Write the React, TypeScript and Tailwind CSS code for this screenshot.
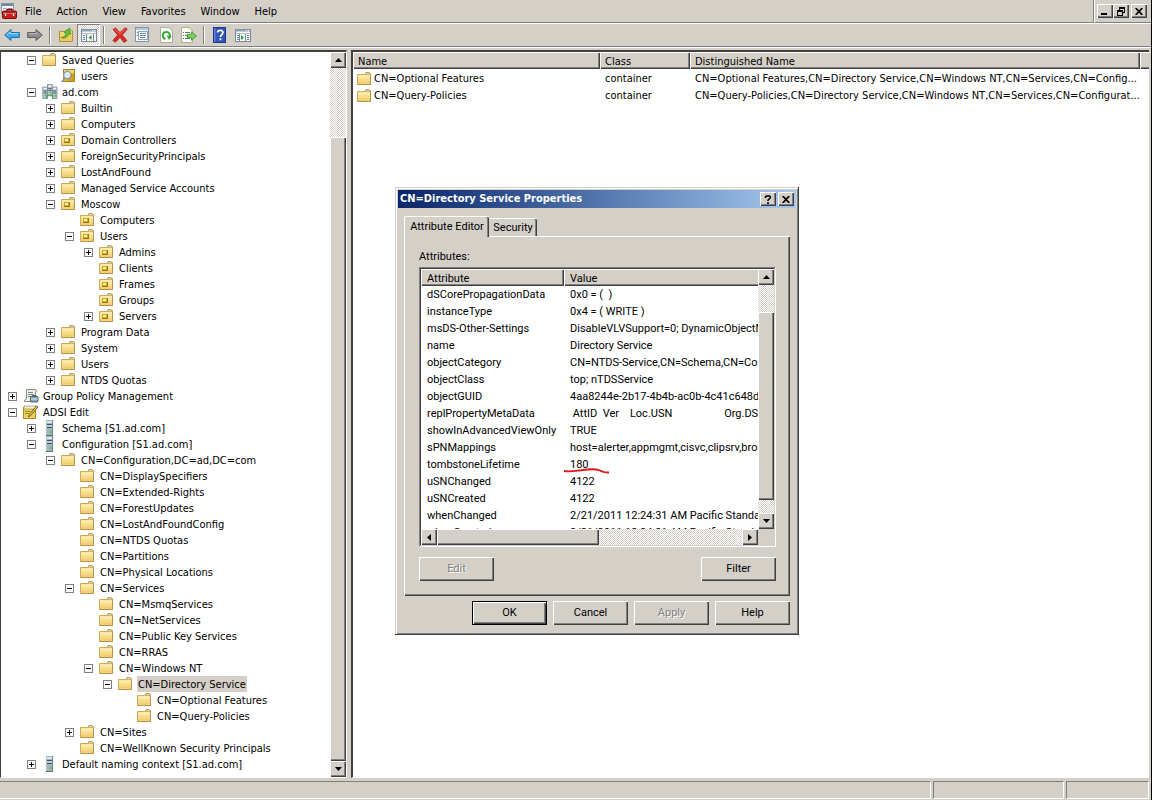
import type { ReactNode } from "react";

const RAISED = "bg-[#d4d0c8] shadow-[inset_1px_1px_0_#fff,inset_-1px_-1px_0_#404040,inset_-2px_-2px_0_#808080]";
const DITHER = "bg-[image:repeating-conic-gradient(#ffffff_0_25%,#d4d0c8_0_50%)] bg-[length:2px_2px]";

type IconKind = "folder" | "ou" | "query" | "domain" | "gpo" | "adsi" | "server";

function FolderShape() {
  return (
    <>
      <path d="M.5 3.5 H8 L9 1.5 H12 L13.5 3 V13.5 H.5 Z" fill="#f7dd8c" stroke="#cfaa58" />
      <path d="M1 4 H13 V7 H1 Z" fill="#fbe9a8" />
      <path d="M1 10 H13 V13 H1 Z" fill="#f2d078" />
      <path d="M8.5 3.2 L9.3 1.5 H12 L13.3 3.2 Z" fill="#fff6d8" stroke="#a98a4a" strokeWidth=".8" />
      <path d="M.5 13.5 H13.5 V4" fill="none" stroke="#b9934a" />
    </>
  );
}

function ServerShape({ x, y, h }: { x: number; y: number; h: number }) {
  return (
    <g>
      <rect x={x} y={y} width="4.6" height={h} fill="#b3c3cc" stroke="#72838f" strokeWidth=".7" />
      <rect x={x + 0.8} y={y + 0.8} width="3" height="1.6" fill="#eef4f8" />
      <path d={`M${x + 0.8} ${y + 4} h3 M${x + 0.8} ${y + 6} h3`} stroke="#3f5160" strokeWidth=".9" />
      <rect x={x + 2.2} y={y + h - 3.6} width="1.6" height="1.6" fill="#54bd4a" />
    </g>
  );
}

function TreeIcon({ kind }: { kind: IconKind }) {
  return (
    <svg viewBox="0 0 16 16" className="h-4 w-4 shrink-0" aria-hidden="true">
      {(kind === "folder" || kind === "ou") && <FolderShape />}
      {kind === "ou" && (
        <g>
          <rect x="3" y="6" width="6" height="5" fill="#9a7d16" />
          <rect x="3" y="6" width="5" height="4" fill="#c9a92c" />
          <rect x="4" y="7" width="3" height="2" fill="#fbf0a8" />
        </g>
      )}
      {kind === "query" && (
        <g>
          <rect x="2.5" y="1.5" width="11" height="12" fill="#dcb93c" stroke="#a8871d" />
          <path d="M3 2 H13 V5 H3 Z" fill="#f0d878" />
          <path d="M10 6 H13 V13 H6 Z" fill="#c79f22" />
          <path d="M4 10 L.8 14" stroke="#8d99a3" strokeWidth="1.8" />
          <circle cx="6.3" cy="7" r="3.6" fill="#dcebf2" stroke="#8d99a3" strokeWidth="1.2" />
        </g>
      )}
      {kind === "domain" && (
        <g>
          <ServerShape x={0.8} y={3} h={11.5} />
          <ServerShape x={10.4} y={3} h={11.5} />
          <ServerShape x={5.6} y={0.6} h={11} />
          <path d="M5 15 V11.5 H10.6 V15" fill="none" stroke="#53a85a" strokeWidth="1.4" />
        </g>
      )}
      {kind === "gpo" && (
        <g>
          <path d="M3.5 1.5 H13 Q14.5 3 12.5 4 V13.5 H1.5 Q0.5 12 3.5 11 Z" fill="#f1efe6" stroke="#8a8a82" />
          <path d="M5 4.5 H10 M5 6.5 H11 M5 8.5 H9" stroke="#7d8790" />
          <rect x="7.5" y="8.5" width="7.5" height="5.5" rx="1" fill="#8ba5b8" stroke="#4b6375" />
          <path d="M9.5 8.5 V7.5 H13 V8.5" fill="none" stroke="#4b6375" />
          <path d="M8 11 H14.5" stroke="#dfe9ef" />
        </g>
      )}
      {kind === "adsi" && (
        <g>
          <path d="M.5 3.5 H12.5 V14.5 H.5 Z" fill="#e9cf58" stroke="#a98b22" />
          <path d="M1 2 H13 V5 H1 Z" fill="#f7f1cf" stroke="#9a915f" strokeWidth=".7" />
          <path d="M2 7.5 H7 M2 9.5 H6" stroke="#a98b22" />
          <path d="M15 3 L7.6 11.5 L5.6 13 L6.3 10.4 L13.4 2 Z" fill="#f4d23a" stroke="#4d4520" strokeWidth=".8" />
        </g>
      )}
      {kind === "server" && (
        <g>
          <rect x="4" y="0" width="7" height="16" fill="#9fb4bd" />
          <path d="M4.4 0 V16" stroke="#b4c5cc" />
          <path d="M10.6 0 V16" stroke="#6e8490" />
          <path d="M5 1 H10 V3 H5 Z" fill="#dde9ed" />
          <path d="M5 4.5 H10 M5 7.5 H10" stroke="#41535e" />
          <path d="M5 6 H10" stroke="#dde8ec" />
          <rect x="8" y="11" width="2" height="2" fill="#5fc24f" />
          <path d="M4 15.5 H11" stroke="#5d727d" />
        </g>
      )}
    </svg>
  );
}

type Node = { d: number; label: string; icon?: IconKind; ex?: "+" | "-"; selected?: boolean };

const nodes: Node[] = [
  { d: 1, label: "Saved Queries", ex: "-" },
  { d: 2, label: "users", icon: "query" },
  { d: 1, label: "ad.com", icon: "domain", ex: "-" },
  { d: 2, label: "Builtin", ex: "+" },
  { d: 2, label: "Computers", ex: "+" },
  { d: 2, label: "Domain Controllers", icon: "ou", ex: "+" },
  { d: 2, label: "ForeignSecurityPrincipals", ex: "+" },
  { d: 2, label: "LostAndFound", ex: "+" },
  { d: 2, label: "Managed Service Accounts", ex: "+" },
  { d: 2, label: "Moscow", icon: "ou", ex: "-" },
  { d: 3, label: "Computers", icon: "ou" },
  { d: 3, label: "Users", icon: "ou", ex: "-" },
  { d: 4, label: "Admins", icon: "ou", ex: "+" },
  { d: 4, label: "Clients", icon: "ou" },
  { d: 4, label: "Frames", icon: "ou" },
  { d: 4, label: "Groups", icon: "ou" },
  { d: 4, label: "Servers", icon: "ou", ex: "+" },
  { d: 2, label: "Program Data", ex: "+" },
  { d: 2, label: "System", ex: "+" },
  { d: 2, label: "Users", ex: "+" },
  { d: 2, label: "NTDS Quotas", ex: "+" },
  { d: 0, label: "Group Policy Management", icon: "gpo", ex: "+" },
  { d: 0, label: "ADSI Edit", icon: "adsi", ex: "-" },
  { d: 1, label: "Schema [S1.ad.com]", icon: "server", ex: "+" },
  { d: 1, label: "Configuration [S1.ad.com]", icon: "server", ex: "-" },
  { d: 2, label: "CN=Configuration,DC=ad,DC=com", ex: "-" },
  { d: 3, label: "CN=DisplaySpecifiers" },
  { d: 3, label: "CN=Extended-Rights" },
  { d: 3, label: "CN=ForestUpdates" },
  { d: 3, label: "CN=LostAndFoundConfig" },
  { d: 3, label: "CN=NTDS Quotas" },
  { d: 3, label: "CN=Partitions" },
  { d: 3, label: "CN=Physical Locations" },
  { d: 3, label: "CN=Services", ex: "-" },
  { d: 4, label: "CN=MsmqServices" },
  { d: 4, label: "CN=NetServices" },
  { d: 4, label: "CN=Public Key Services" },
  { d: 4, label: "CN=RRAS" },
  { d: 4, label: "CN=Windows NT", ex: "-" },
  { d: 5, label: "CN=Directory Service", ex: "-", selected: true },
  { d: 6, label: "CN=Optional Features" },
  { d: 6, label: "CN=Query-Policies" },
  { d: 3, label: "CN=Sites", ex: "+" },
  { d: 3, label: "CN=WellKnown Security Principals" },
  { d: 1, label: "Default naming context [S1.ad.com]", icon: "server", ex: "+" },
];

const INDENT = ["pl-[7px]", "pl-[26px]", "pl-[45px]", "pl-[64px]", "pl-[83px]", "pl-[102px]", "pl-[121px]"];

function TreeRow({ node }: { node: Node }) {
  return (
    <li className={`flex h-4 items-center ${INDENT[node.d]}`}>
      {node.ex ? (
        <button
          type="button"
          aria-label={`${node.ex === "+" ? "Expand" : "Collapse"} ${node.label}`}
          className="mr-1.5 h-[9px] w-[9px] shrink-0 border border-[#808080] bg-white"
        >
          <svg viewBox="0 0 7 7" className="block h-[7px] w-[7px]" shapeRendering="crispEdges">
            <path d="M1 3h5v1H1z" />
            {node.ex === "+" && <path d="M3 1h1v5H3z" />}
          </svg>
        </button>
      ) : (
        <span className="mr-1.5 w-[9px] shrink-0" />
      )}
      <TreeIcon kind={node.icon ?? "folder"} />
      <span className={`ml-[3px] h-4 px-px leading-[18px] whitespace-nowrap ${node.selected ? "bg-[#d4d0c8]" : ""}`}>
        {node.label}
      </span>
    </li>
  );
}

const ARROWS = {
  up: "M0 4 L3.5 0 L7 4 Z",
  down: "M0 0 H7 L3.5 4 Z",
  left: "M4 0 V7 L0 3.5 Z",
  right: "M0 0 V7 L4 3.5 Z",
};

function ScrollButton({ dir }: { dir: keyof typeof ARROWS }) {
  const horizontal = dir === "left" || dir === "right";
  return (
    <button type="button" aria-label={`Scroll ${dir}`} className={`flex h-4 w-4 shrink-0 items-center justify-center ${RAISED}`}>
      <svg viewBox={horizontal ? "0 0 4 7" : "0 0 7 4"} className={horizontal ? "h-[7px] w-1" : "h-1 w-[7px]"}>
        <path d={ARROWS[dir]} />
      </svg>
    </button>
  );
}

function ToolButton({ label, pressed, children }: { label: string; pressed?: boolean; children: ReactNode }) {
  return (
    <button
      type="button"
      aria-label={label}
      className={`flex h-[22px] w-[23px] items-center justify-center ${
        pressed ? `${DITHER} shadow-[inset_1px_1px_0_#808080,inset_-1px_-1px_0_#fff]` : ""
      }`}
    >
      <svg viewBox="0 0 16 16" className="h-4 w-4">
        {children}
      </svg>
    </button>
  );
}

function Separator() {
  return (
    <span className="flex w-2 justify-center">
      <span className="h-[18px] w-0.5 border-l border-[#808080] bg-white" />
    </span>
  );
}

function PaneGlyph({ flip }: { flip?: boolean }) {
  return (
    <g>
      <rect x=".5" y="2.5" width="15" height="12" fill="#f6f8f8" stroke="#7d8a96" />
      <path d="M1 3.5 H15" stroke="#8ea0b2" strokeWidth="2" />
      <path d="M11 3.5 h1 M13 3.5 h1" stroke="#fff" />
      <path d="M1 6.5 H15" stroke="#b6c0c8" />
      <path d={flip ? "M4.5 7 V14 M10.5 7 V14" : "M5.5 7 V14 M12.5 7 V14"} stroke="#7d8a96" />
      <path
        d={flip ? "M2 8.5 h2 M2 10.5 h2 M2 12.5 h2 M12 8.5 h2 M12 10.5 h2 M12 12.5 h2" : "M2 8.5 h2 M2 10.5 h2 M2 12.5 h2"}
        stroke="#5f86b3"
      />
      <path d={flip ? "M6 8 V13 L9 10.5 Z" : "M10.5 8 V13 L7.5 10.5 Z"} fill="#2e9e38" />
    </g>
  );
}

const TH = "h-[17px] bg-[#d4d0c8] p-0 pt-0.5 text-left leading-[15px] font-normal";
const TH_EDGE = "shadow-[inset_1px_1px_0_#fff,inset_-1px_-1px_0_#404040,inset_-2px_-2px_0_#808080]";
const TH_LAST = "shadow-[inset_1px_1px_0_#fff,inset_0_-1px_0_#404040,inset_0_-2px_0_#808080]";
const TD = "h-[17px] p-0 pt-0.5 leading-[15px] whitespace-pre";
const ATTR_TD = "h-[17px] p-0 pl-1.5 leading-[17px] whitespace-pre";

const results = [
  ["CN=Optional Features", "container", "CN=Optional Features,CN=Directory Service,CN=Windows NT,CN=Services,CN=Config..."],
  ["CN=Query-Policies", "container", "CN=Query-Policies,CN=Directory Service,CN=Windows NT,CN=Services,CN=Configurat..."],
];

const attributes = [
  ["dSCorePropagationData", "0x0 = (  )"],
  ["instanceType", "0x4 = ( WRITE )"],
  ["msDS-Other-Settings", "DisableVLVSupport=0; DynamicObjectM"],
  ["name", "Directory Service"],
  ["objectCategory", "CN=NTDS-Service,CN=Schema,CN=Co"],
  ["objectClass", "top; nTDSService"],
  ["objectGUID", "4aa8244e-2b17-4b4b-ac0b-4c41c648d5"],
  ["replPropertyMetaData", " AttID  Ver    Loc.USN                   Org.DS"],
  ["showInAdvancedViewOnly", "TRUE"],
  ["sPNMappings", "host=alerter,appmgmt,cisvc,clipsrv,brow"],
  ["tombstoneLifetime", "180"],
  ["uSNChanged", "4122"],
  ["uSNCreated", "4122"],
  ["whenChanged", "2/21/2011 12:24:31 AM Pacific Standa"],
  ["whenCreated", "2/21/2011 12:24:31 AM Pacific Standa"],
];

function DialogButton({ label, primary, disabled }: { label: string; primary?: boolean; disabled?: boolean }) {
  return (
    <button
      type="button"
      disabled={disabled}
      className={`h-6 w-[75px] pt-px ${RAISED} ${primary ? "border border-black" : ""} ${
        disabled ? "text-[#808080] [text-shadow:1px_1px_0_#fff]" : ""
      }`}
    >
      {label}
    </button>
  );
}

function PropertiesDialog() {
  return (
    <section
      role="dialog"
      aria-label="CN=Directory Service Properties"
      className="absolute top-[187px] left-[395px] w-[404px] bg-[#d4d0c8] p-[3px] pb-2.5 font-[Roboto,'Liberation_Sans',Arial,sans-serif] shadow-[inset_-1px_-1px_0_#404040,inset_1px_1px_0_#d4d0c8,inset_2px_2px_0_#fff,inset_-2px_-2px_0_#808080]"
    >
      <header className="flex h-[18px] items-center bg-linear-to-r from-[#0a246a] to-[#a6caf0] pr-0.5 pl-0.5">
        <h2 className="flex-1 pt-px font-['DejaVu_Sans_Condensed','DejaVu_Sans',sans-serif] text-[11px] font-bold text-white">
          CN=Directory Service Properties
        </h2>
        <button type="button" aria-label="Help" className={`mr-0.5 flex h-[14px] w-4 items-center justify-center ${RAISED}`}>
          <svg viewBox="0 0 8 9" className="h-[9px] w-2">
            <path d="M1.5 3 V1.8 L2.5 1 H5.5 L6.3 1.8 V3 L4 5 V6" fill="none" stroke="#000" strokeWidth="1.6" />
            <path d="M3.1 7.2 h1.8 V9 h-1.8 z" />
          </svg>
        </button>
        <button type="button" aria-label="Close" className={`flex h-[14px] w-4 items-center justify-center ${RAISED}`}>
          <svg viewBox="0 0 8 7" className="h-[7px] w-2">
            <path d="M.7 0 L7.3 7 M7.3 0 L.7 7" stroke="#000" strokeWidth="1.7" />
          </svg>
        </button>
      </header>

      <div className="px-1.5 pt-2">
        <div role="tablist" className="flex h-5 items-end">
          <button
            type="button"
            role="tab"
            aria-selected="true"
            className="relative z-10 -mb-px h-[21px] w-[85px] rounded-t-xs border-t border-l border-white bg-[#d4d0c8] shadow-[inset_-1px_0_0_#404040,inset_-2px_0_0_#808080]"
          >
            Attribute Editor
          </button>
          <button
            type="button"
            role="tab"
            aria-selected="false"
            className="h-[18px] w-12 rounded-t-xs border-t border-white bg-[#d4d0c8] pt-px shadow-[inset_-1px_0_0_#404040,inset_-2px_0_0_#808080]"
          >
            Security
          </button>
        </div>

        <div role="tabpanel" className="border-t border-l border-white px-3.5 pt-3 pb-[15px] shadow-[inset_-1px_-1px_0_#404040,inset_-2px_-2px_0_#808080]">
          <h3 className="leading-4">Attributes:</h3>
          <div className="mt-0.5 border-t border-r border-b border-l border-t-[#808080] border-r-white border-b-white border-l-[#808080]">
            <div className="border border-t-[#404040] border-r-[#d4d0c8] border-b-[#d4d0c8] border-l-[#404040]">
              <div className="flex h-[260px]">
                <div className="relative flex-1 overflow-hidden bg-white">
                  <table className="w-full table-fixed border-collapse">
                    <thead>
                      <tr>
                        <th scope="col" className={`w-[143px] pl-1.5 ${TH} ${TH_EDGE}`}>Attribute</th>
                        <th scope="col" className={`pl-1.5 ${TH} ${TH_LAST}`}>Value</th>
                      </tr>
                    </thead>
                    <tbody>
                      {attributes.map(([name, value]) => (
                        <tr key={name}>
                          <td className={ATTR_TD}>{name}</td>
                          <td className={`overflow-hidden ${ATTR_TD}`}>{value}</td>
                        </tr>
                      ))}
                    </tbody>
                  </table>
                  <svg viewBox="0 0 48 8" className="absolute top-[197px] left-[142px] h-2 w-12" aria-hidden="true">
                    <path d="M1 5 C8 6 14 4.5 20 4 C28 2.8 33 2.8 37 4.5 C40 6.5 42 6.5 46 6.5" fill="none" stroke="#e0141c" strokeWidth="1.8" />
                  </svg>
                </div>
                <div className={`flex w-4 flex-col ${DITHER}`}>
                  <ScrollButton dir="up" />
                  <span className="h-[27px]" />
                  <span className={`h-[188px] ${RAISED}`} />
                  <span className="flex-1" />
                  <ScrollButton dir="down" />
                </div>
              </div>
              <div className="flex h-4">
                <div className={`flex flex-1 ${DITHER}`}>
                  <ScrollButton dir="left" />
                  <span className={`w-[162px] ${RAISED}`} />
                  <span className="flex-1" />
                  <ScrollButton dir="right" />
                </div>
                <span className="w-4 bg-[#d4d0c8]" />
              </div>
            </div>
          </div>
          <div className="mt-2.5 flex justify-between">
            <DialogButton label="Edit" disabled />
            <DialogButton label="Filter" />
          </div>
        </div>

        <footer className="mt-[5px] flex justify-end gap-1.5">
          <DialogButton label="OK" primary />
          <DialogButton label="Cancel" />
          <DialogButton label="Apply" disabled />
          <DialogButton label="Help" />
        </footer>
      </div>
    </section>
  );
}

export default function App() {
  return (
    <div className="relative flex h-screen flex-col overflow-hidden border-r border-black bg-[#d4d0c8] font-['DejaVu_Sans_Condensed','DejaVu_Sans',sans-serif] text-[11px] text-black">
      <header className="flex h-6 items-stretch border-b border-white shadow-[inset_0_-1px_0_#808080]">
        <svg viewBox="0 0 16 16" className="mt-[3px] ml-px h-4 w-4" aria-hidden="true">
          <rect x=".5" y=".5" width="12" height="10" fill="#f4f6f8" stroke="#8393a5" />
          <path d="M1 2 H12" stroke="#7189a8" strokeWidth="2" />
          <path d="M2 5.5 H5 M7 5.5 H11" stroke="#9aa6b2" />
          <path d="M6 8 V6.5 H11 V8" fill="none" stroke="#7a1111" strokeWidth="1.4" />
          <rect x="1.5" y="8" width="14" height="7.5" rx="1" fill="#c8201c" stroke="#7d0f0f" />
          <path d="M2 10.5 H15" stroke="#e0645a" />
          <path d="M4.5 10.5 V13 M12.5 10.5 V13" stroke="#f4e6e0" strokeWidth="1.3" />
        </svg>
        <nav aria-label="Main menu" className="flex flex-1 gap-[15px] pt-px pl-2">
          {["File", "Action", "View", "Favorites", "Window", "Help"].map((item) => (
            <button key={item} type="button">
              {item}
            </button>
          ))}
        </nav>
        <div className="flex items-center border-l border-[#808080] pr-1 pb-px pl-[3px] shadow-[inset_1px_0_0_#fff]">
          <button type="button" aria-label="Minimize" className={`flex h-[14px] w-4 justify-center ${RAISED}`}>
            <svg viewBox="0 0 8 12" className="h-3 w-2" shapeRendering="crispEdges">
              <path d="M0 9h6v2H0z" />
            </svg>
          </button>
          <button type="button" aria-label="Restore" className={`mr-0.5 flex h-[14px] w-4 items-center justify-center ${RAISED}`}>
            <svg viewBox="0 0 9 9" className="h-[9px] w-[9px]" shapeRendering="crispEdges">
              <path d="M2 0h6v6H6V5h1V2H3v1H2zM0 3h6v6H0zM1 5v3h4V5z" fillRule="evenodd" />
            </svg>
          </button>
          <button type="button" aria-label="Close" className={`flex h-[14px] w-4 items-center justify-center ${RAISED}`}>
            <svg viewBox="0 0 8 7" className="h-[7px] w-2">
              <path d="M.7 0 L7.3 7 M7.3 0 L.7 7" stroke="#000" strokeWidth="1.7" />
            </svg>
          </button>
        </div>
      </header>

      <div role="toolbar" aria-label="Standard" className="flex h-[23px] items-center border-b border-[#808080]">
        <ToolButton label="Back">
          <path d="M.7 8 L7 2.5 V5.5 H15.3 V10.5 H7 V13.5 Z" fill="#3fa9e6" stroke="#1b6fa8" />
          <path d="M3 7.5 L6.2 4.8 V6.7 H14.3" fill="none" stroke="#a4dcfa" />
        </ToolButton>
        <ToolButton label="Forward">
          <path d="M15.3 8 L9 2.5 V5.5 H.7 V10.5 H9 V13.5 Z" fill="#8d8d8d" stroke="#5c5c5c" />
          <path d="M1.7 6.7 H9.8 V5" fill="none" stroke="#c2c2c2" />
        </ToolButton>
        <Separator />
        <ToolButton label="Up one level">
          <path d="M1.5 4.5 H7 L8.5 3 H13.5 L14.5 4 V14.5 H1.5 Z" fill="#f4d679" stroke="#b98f36" />
          <path d="M2 9 H14 V14 H2 Z" fill="#efc860" />
          <path d="M3.2 10.5 C6 10.5 7.6 8.6 8.2 6.2 L6 5.4 L11.6 1.2 L12.6 7.6 L10.6 6.9 C9.6 10 7 12 3.2 10.5 Z" fill="#5fc43e" stroke="#2f8a22" strokeWidth=".7" />
        </ToolButton>
        <ToolButton label="Show or hide console tree" pressed>
          <PaneGlyph />
        </ToolButton>
        <Separator />
        <ToolButton label="Delete">
          <path d="M1 2.5 L3.5 .8 L8 5.5 L13 .8 L15.3 2 L10.3 8 L15 13.5 L12 15.5 L8 10.6 L3.5 15.3 L.8 13.5 L5.6 8 Z" fill="#d92a22" stroke="#a51410" strokeWidth=".6" />
          <path d="M2.8 2 L8 7 L13 2" fill="none" stroke="#f2837a" strokeWidth=".8" />
        </ToolButton>
        <ToolButton label="Properties">
          <rect x=".5" y=".5" width="13" height="14" fill="#f4f7f9" stroke="#7f93a6" />
          <path d="M1 2 H13" stroke="#b6c8d6" strokeWidth="2" />
          <rect x="3.5" y="4.5" width="9" height="8" fill="#fff" stroke="#90a6b8" />
          <path d="M2 5.5 H3 M2 8.5 H3 M5 6.5 H11 M5 8.5 H11 M5 10.5 H10" stroke="#6283a3" />
        </ToolButton>
        <ToolButton label="Refresh">
          <path d="M2.5 .5 H11 L14.5 4 V15.5 H2.5 Z" fill="#fdfdfb" stroke="#a9ac9c" />
          <path d="M7.4 12 A3.6 3.6 0 1 1 11.6 10" fill="none" stroke="#37ab34" strokeWidth="2" />
          <path d="M8.6 8.6 L13.6 9 L11 13 Z" fill="#37ab34" />
        </ToolButton>
        <ToolButton label="Export list">
          <path d="M.5 .5 H8 L11.5 4 V15.5 H.5 Z" fill="#fdfcf0" stroke="#b3af8c" />
          <path d="M2 5.5 H3 M4 5.5 H9 M2 8.5 H3 M4 8.5 H8 M2 11.5 H3 M4 11.5 H9" stroke="#5b7486" />
          <path d="M6.5 7.3 H10.5 V4.8 L15.5 9 L10.5 13.2 V10.7 H6.5 Z" fill="#7bd25a" stroke="#34912b" strokeWidth=".8" />
        </ToolButton>
        <Separator />
        <ToolButton label="Help">
          <rect x="1.5" y=".5" width="12" height="15" fill="#3158b8" stroke="#1b3582" />
          <path d="M2.8 1 V15" stroke="#7e9be0" />
          <path d="M5.6 5.6 C5.6 2.6 11 2.6 11 5.6 C11 7.6 8.4 7.6 8.4 10" fill="none" stroke="#fff" strokeWidth="1.7" />
          <rect x="7.5" y="11.3" width="1.9" height="1.9" fill="#fff" />
        </ToolButton>
        <ToolButton label="Show or hide action pane">
          <PaneGlyph flip />
        </ToolButton>
      </div>

      <main className="flex min-h-0 flex-1 gap-1 border-t border-white pt-0.5 pr-0.5">
        <aside className="flex w-[347px] shrink-0 border-t-2 border-r border-b border-l border-t-[#404040] border-r-white border-b-white border-l-[#404040] bg-white">
          <ul className="min-w-0 flex-1 overflow-hidden" aria-label="Console tree">
            {nodes.map((node, i) => (
              <TreeRow key={i} node={node} />
            ))}
          </ul>
          <div className={`flex w-4 flex-col ${DITHER}`}>
            <ScrollButton dir="up" />
            <span className="h-[69px]" />
            <span className={`flex-1 ${RAISED}`} />
            <ScrollButton dir="down" />
          </div>
        </aside>

        <section
          className="min-w-0 flex-1 overflow-hidden border-t-2 border-b border-l-2 border-t-[#404040] border-b-white border-l-[#404040] bg-white"
          aria-label="Results"
        >
          <table className="w-full table-fixed border-collapse">
            <thead>
              <tr>
                <th scope="col" className={`w-[247px] pl-[5px] ${TH} ${TH_EDGE}`}>Name</th>
                <th scope="col" className={`w-[90px] pl-[5px] ${TH} ${TH_EDGE}`}>Class</th>
                <th scope="col" className={`pl-[5px] ${TH} ${TH_EDGE}`}>Distinguished Name</th>
                <th aria-hidden="true" className={`w-[9px] ${TH} ${TH_LAST}`} />
              </tr>
            </thead>
            <tbody>
              {results.map(([name, cls, dn]) => (
                <tr key={name}>
                  <td className={`pl-1 ${TD}`}>
                    <span className="flex h-[15px] items-center">
                      <TreeIcon kind="folder" />
                      <span className="pl-px">{name}</span>
                    </span>
                  </td>
                  <td className={`pl-[5px] ${TD}`}>{cls}</td>
                  <td className={`pl-[5px] ${TD}`}>{dn}</td>
                  <td className="p-0" />
                </tr>
              ))}
            </tbody>
          </table>
        </section>
      </main>

      <footer className="flex h-[22px] shrink-0 gap-0.5 pt-[3px] pr-0.5 pb-px">
        <span className="flex-1 border-t border-r border-b border-t-[#808080] border-r-white border-b-white" />
        <span className="w-[131px] border border-t-[#808080] border-r-white border-b-white border-l-[#808080]" />
        <span className="w-[83px] border border-t-[#808080] border-r-white border-b-white border-l-[#808080]" />
      </footer>

      <PropertiesDialog />
    </div>
  );
}
